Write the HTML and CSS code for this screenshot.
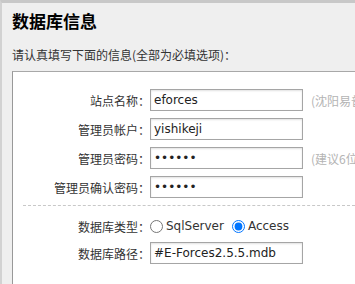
FILE: index.html
```html
<!DOCTYPE html>
<html>

<head>
    <title>数据库信息</title>
    <link rel="stylesheet" href="styles.css">
</head>

<body>
    <div class="panel">
        <h2 class="title">数据库信息</h2>
        <p class="intro">请认真填写下面的信息(全部为必填选项)：</p>
        <div class="form">
            <div class="row">
                <label class="label">站点名称：</label>
                <input class="field" type="text" value="eforces">
                <span class="hint">(沈阳易普网络科技有限公司)</span>
            </div>
            <div class="row">
                <label class="label">管理员帐户：</label>
                <input class="field" type="text" value="yishikeji">
            </div>
            <div class="row">
                <label class="label">管理员密码：</label>
                <input class="field" type="password" value="123456">
                <span class="hint">(建议6位以上)</span>
            </div>
            <div class="row">
                <label class="label">管理员确认密码：</label>
                <input class="field" type="password" value="123456">
            </div>
            <div class="sep"></div>
            <div class="row radios">
                <label class="label">数据库类型：</label>
                <label class="opt"><input type="radio" name="db">SqlServer</label>
                <label class="opt"><input type="radio" name="db" checked>Access</label>
            </div>
            <div class="row">
                <label class="label">数据库路径：</label>
                <input class="field" type="text" value="#E-Forces2.5.5.mdb">
            </div>
        </div>
    </div>
</body>

</html>
```

FILE: styles.css
```css
body {
    margin: 0;
    background-color: #efefef;
    border-top: 3px solid #c8c8c8;
    border-left: 2px solid #d2d2d2;
    font-family: "Noto Sans CJK SC", sans-serif;
    color: #333;
    overflow: hidden;
}

.panel {
    padding-left: 10px;
}

.title {
    margin: 0;
    padding-top: 6px;
    font-size: 17px;
    line-height: 24px;
    font-weight: bold;
    color: #000;
}

.intro {
    margin: 0;
    padding-top: 13px;
    font-size: 12px;
    line-height: 18px;
}

.form {
    margin-top: 7px;
    background-color: #fff;
    border-top: 1px solid #a8a8a8;
    border-left: 1px solid #999;
    padding-top: 17px;
    height: 300px;
}

.row {
    display: flex;
    align-items: center;
    height: 22px;
    margin-bottom: 7px;
    font-size: 12px;
    white-space: nowrap;
}

.label {
    width: 137px;
    flex: none;
    text-align: right;
}

.field {
    width: 153px;
    height: 22px;
    box-sizing: border-box;
    margin: 0;
    border: 1px solid #a5a5a5;
    box-shadow: inset 0 1px 2px rgba(0, 0, 0, 0.12);
    padding: 0 3px;
    font-family: "DejaVu Sans", sans-serif;
    font-size: 12px;
    color: #222;
}

.hint {
    margin-left: 8px;
    color: #b4b4b4;
}

.sep {
    margin: 3px 0 0 10px;
    border-top: 1px dashed #c8c8c8;
}

.radios {
    margin-top: 9px;
    margin-bottom: 5px;
}

.opt {
    display: flex;
    align-items: center;
    font-family: "DejaVu Sans", sans-serif;
    font-size: 12px;
    color: #333;
    margin-right: 8px;
}

.opt input {
    margin: 0 3px 0 0;
    width: 13px;
    height: 13px;
}
```
